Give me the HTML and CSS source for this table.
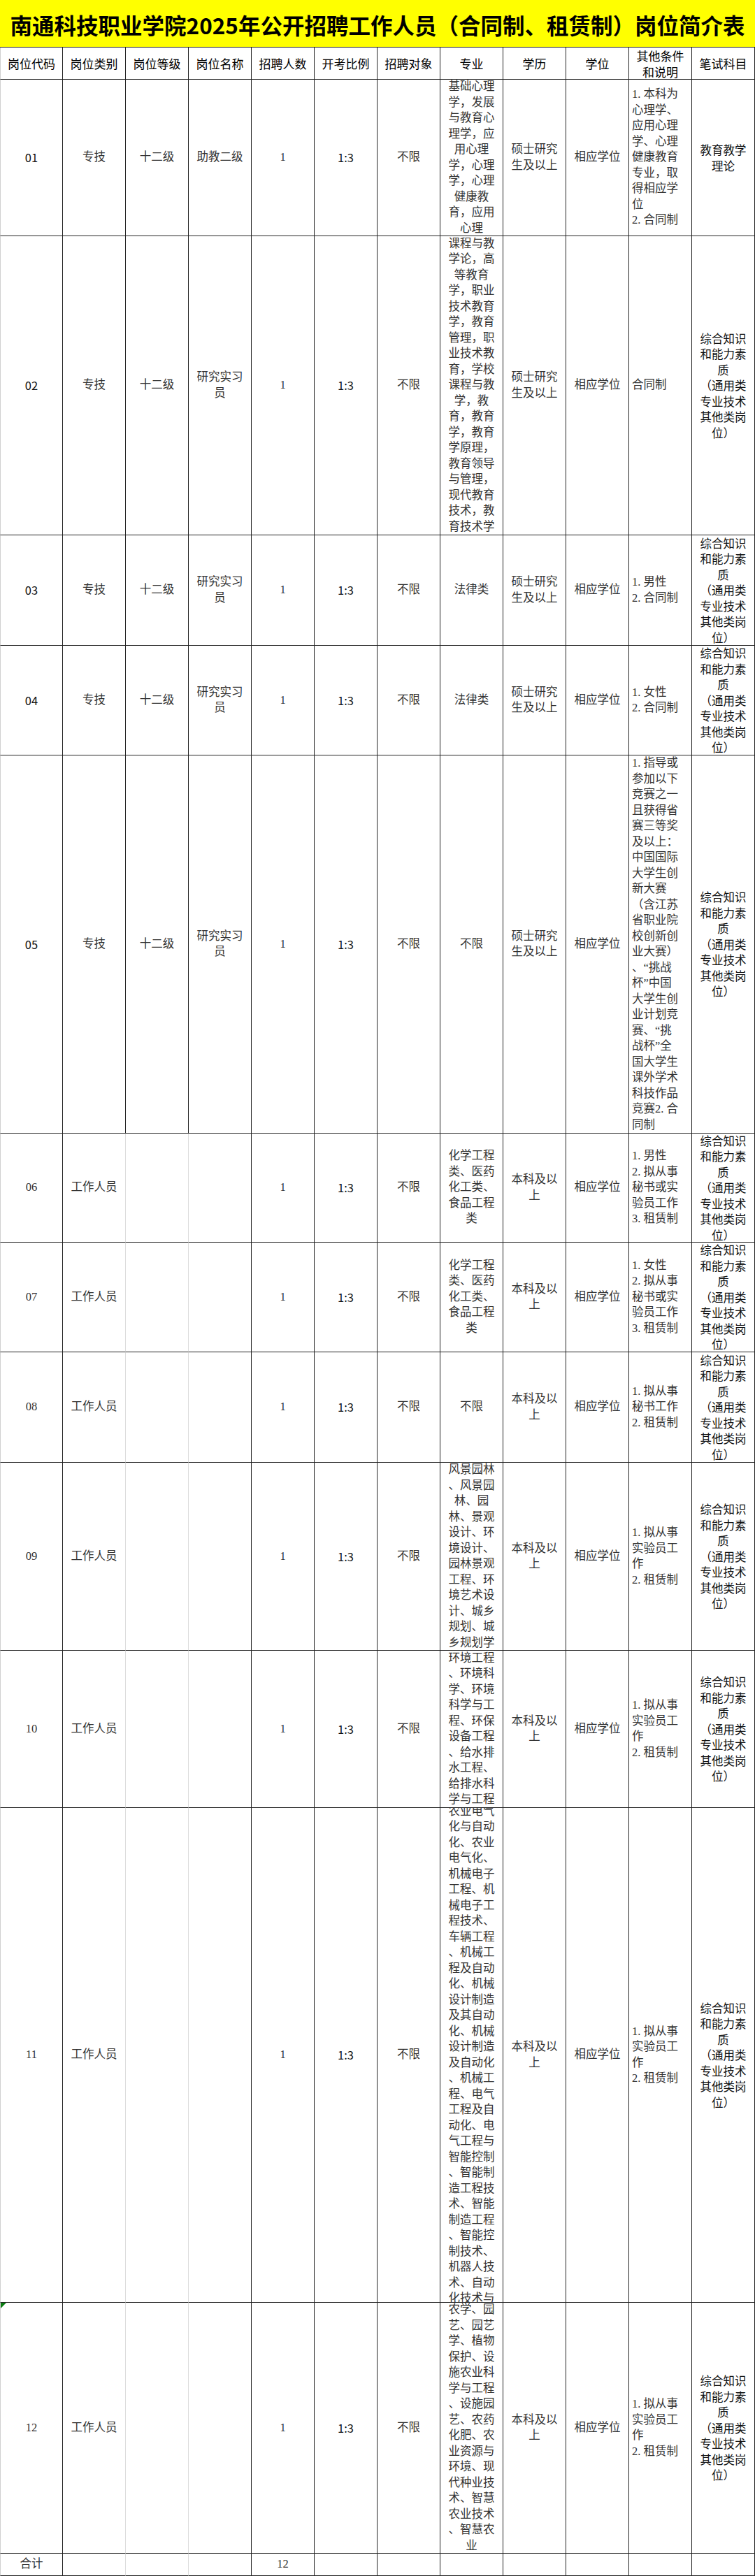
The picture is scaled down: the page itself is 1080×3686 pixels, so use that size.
FILE: index.html
```html
<!DOCTYPE html>
<html lang="zh-CN">
<head>
<meta charset="utf-8">
<title>岗位简介表</title>
<link rel="stylesheet" href="styles.css">
</head>
<body>
<div class="sheet">
  <div class="title">南通科技职业学院2025年公开招聘工作人员（合同制、租赁制）岗位简介表</div>
  <div class="grid">
    <div class="c h">岗位代码</div><div class="c h">岗位类别</div><div class="c h">岗位等级</div><div class="c h">岗位名称</div><div class="c h">招聘人数</div><div class="c h">开考比例</div><div class="c h">招聘对象</div><div class="c h">专业</div><div class="c h">学历</div><div class="c h">学位</div><div class="c h">其他条件<br>和说明</div><div class="c h">笔试科目</div>

    <div class="c s">01</div><div class="c">专技</div><div class="c">十二级</div><div class="c">助教二级</div><div class="c">1</div><div class="c s">1:3</div><div class="c">不限</div>
    <div class="c"><div>基础心理<br>学，发展<br>与教育心<br>理学，应<br>用心理<br>学，心理<br>学，心理<br>健康教<br>育，应用<br>心理</div></div>
    <div class="c">硕士研究<br>生及以上</div><div class="c">相应学位</div>
    <div class="c l"><div>1. 本科为<br>心理学、<br>应用心理<br>学、心理<br>健康教育<br>专业，取<br>得相应学<br>位<br>2. 合同制</div></div>
    <div class="c s">教育教学<br>理论</div>

    <div class="c s">02</div><div class="c">专技</div><div class="c">十二级</div><div class="c">研究实习<br>员</div><div class="c">1</div><div class="c s">1:3</div><div class="c">不限</div>
    <div class="c"><div>课程与教<br>学论，高<br>等教育<br>学，职业<br>技术教育<br>学，教育<br>管理，职<br>业技术教<br>育，学校<br>课程与教<br>学，教<br>育，教育<br>学，教育<br>学原理，<br>教育领导<br>与管理，<br>现代教育<br>技术，教<br>育技术学</div></div>
    <div class="c">硕士研究<br>生及以上</div><div class="c">相应学位</div>
    <div class="c l">合同制</div>
    <div class="c s">综合知识<br>和能力素<br>质<br>（通用类<br>专业技术<br>其他类岗<br>位）</div>

    <div class="c s">03</div><div class="c">专技</div><div class="c">十二级</div><div class="c">研究实习<br>员</div><div class="c">1</div><div class="c s">1:3</div><div class="c">不限</div>
    <div class="c">法律类</div>
    <div class="c">硕士研究<br>生及以上</div><div class="c">相应学位</div>
    <div class="c l">1. 男性<br>2. 合同制</div>
    <div class="c s">综合知识<br>和能力素<br>质<br>（通用类<br>专业技术<br>其他类岗<br>位）</div>

    <div class="c s">04</div><div class="c">专技</div><div class="c">十二级</div><div class="c">研究实习<br>员</div><div class="c">1</div><div class="c s">1:3</div><div class="c">不限</div>
    <div class="c">法律类</div>
    <div class="c">硕士研究<br>生及以上</div><div class="c">相应学位</div>
    <div class="c l">1. 女性<br>2. 合同制</div>
    <div class="c s">综合知识<br>和能力素<br>质<br>（通用类<br>专业技术<br>其他类岗<br>位）</div>

    <div class="c s">05</div><div class="c">专技</div><div class="c">十二级</div><div class="c">研究实习<br>员</div><div class="c">1</div><div class="c s">1:3</div><div class="c">不限</div>
    <div class="c">不限</div>
    <div class="c">硕士研究<br>生及以上</div><div class="c">相应学位</div>
    <div class="c l"><div>1. 指导或<br>参加以下<br>竞赛之一<br>且获得省<br>赛三等奖<br>及以上：<br>中国国际<br>大学生创<br>新大赛<br>（含江苏<br>省职业院<br>校创新创<br>业大赛）<br>、“挑战<br>杯”中国<br>大学生创<br>业计划竞<br>赛、“挑<br>战杯”全<br>国大学生<br>课外学术<br>科技作品<br>竞赛2. 合<br>同制</div></div>
    <div class="c s">综合知识<br>和能力素<br>质<br>（通用类<br>专业技术<br>其他类岗<br>位）</div>

    <div class="c">06</div><div class="c g">工作人员</div><div class="c g"></div><div class="c"></div><div class="c">1</div><div class="c s">1:3</div><div class="c">不限</div>
    <div class="c">化学工程<br>类、医药<br>化工类、<br>食品工程<br>类</div>
    <div class="c">本科及以<br>上</div><div class="c">相应学位</div>
    <div class="c l">1. 男性<br>2. 拟从事<br>秘书或实<br>验员工作<br>3. 租赁制</div>
    <div class="c s">综合知识<br>和能力素<br>质<br>（通用类<br>专业技术<br>其他类岗<br>位）</div>

    <div class="c">07</div><div class="c g">工作人员</div><div class="c g"></div><div class="c"></div><div class="c">1</div><div class="c s">1:3</div><div class="c">不限</div>
    <div class="c">化学工程<br>类、医药<br>化工类、<br>食品工程<br>类</div>
    <div class="c">本科及以<br>上</div><div class="c">相应学位</div>
    <div class="c l">1. 女性<br>2. 拟从事<br>秘书或实<br>验员工作<br>3. 租赁制</div>
    <div class="c s">综合知识<br>和能力素<br>质<br>（通用类<br>专业技术<br>其他类岗<br>位）</div>

    <div class="c">08</div><div class="c g">工作人员</div><div class="c g"></div><div class="c"></div><div class="c">1</div><div class="c s">1:3</div><div class="c">不限</div>
    <div class="c">不限</div>
    <div class="c">本科及以<br>上</div><div class="c">相应学位</div>
    <div class="c l">1. 拟从事<br>秘书工作<br>2. 租赁制</div>
    <div class="c s">综合知识<br>和能力素<br>质<br>（通用类<br>专业技术<br>其他类岗<br>位）</div>

    <div class="c">09</div><div class="c g">工作人员</div><div class="c g"></div><div class="c"></div><div class="c">1</div><div class="c s">1:3</div><div class="c">不限</div>
    <div class="c"><div>风景园林<br>、风景园<br>林、园<br>林、景观<br>设计、环<br>境设计、<br>园林景观<br>工程、环<br>境艺术设<br>计、城乡<br>规划、城<br>乡规划学</div></div>
    <div class="c">本科及以<br>上</div><div class="c">相应学位</div>
    <div class="c l">1. 拟从事<br>实验员工<br>作<br>2. 租赁制</div>
    <div class="c s">综合知识<br>和能力素<br>质<br>（通用类<br>专业技术<br>其他类岗<br>位）</div>

    <div class="c">10</div><div class="c g">工作人员</div><div class="c g"></div><div class="c"></div><div class="c">1</div><div class="c s">1:3</div><div class="c">不限</div>
    <div class="c"><div>环境工程<br>、环境科<br>学、环境<br>科学与工<br>程、环保<br>设备工程<br>、给水排<br>水工程、<br>给排水科<br>学与工程</div></div>
    <div class="c">本科及以<br>上</div><div class="c">相应学位</div>
    <div class="c l">1. 拟从事<br>实验员工<br>作<br>2. 租赁制</div>
    <div class="c s">综合知识<br>和能力素<br>质<br>（通用类<br>专业技术<br>其他类岗<br>位）</div>

    <div class="c">11</div><div class="c g">工作人员</div><div class="c g"></div><div class="c"></div><div class="c">1</div><div class="c s">1:3</div><div class="c">不限</div>
    <div class="c"><div>农业电气<br>化与自动<br>化、农业<br>电气化、<br>机械电子<br>工程、机<br>械电子工<br>程技术、<br>车辆工程<br>、机械工<br>程及自动<br>化、机械<br>设计制造<br>及其自动<br>化、机械<br>设计制造<br>及自动化<br>、机械工<br>程、电气<br>工程及自<br>动化、电<br>气工程与<br>智能控制<br>、智能制<br>造工程技<br>术、智能<br>制造工程<br>、智能控<br>制技术、<br>机器人技<br>术、自动<br>化技术与</div></div>
    <div class="c">本科及以<br>上</div><div class="c">相应学位</div>
    <div class="c l">1. 拟从事<br>实验员工<br>作<br>2. 租赁制</div>
    <div class="c s">综合知识<br>和能力素<br>质<br>（通用类<br>专业技术<br>其他类岗<br>位）</div>

    <div class="c flag">12</div><div class="c g">工作人员</div><div class="c g"></div><div class="c"></div><div class="c">1</div><div class="c s">1:3</div><div class="c">不限</div>
    <div class="c"><div>农学、园<br>艺、园艺<br>学、植物<br>保护、设<br>施农业科<br>学与工程<br>、设施园<br>艺、农药<br>化肥、农<br>业资源与<br>环境、现<br>代种业技<br>术、智慧<br>农业技术<br>、智慧农<br>业</div></div>
    <div class="c">本科及以<br>上</div><div class="c">相应学位</div>
    <div class="c l">1. 拟从事<br>实验员工<br>作<br>2. 租赁制</div>
    <div class="c s">综合知识<br>和能力素<br>质<br>（通用类<br>专业技术<br>其他类岗<br>位）</div>

    <div class="c">合计</div><div class="c g"></div><div class="c g"></div><div class="c"></div><div class="c">12</div><div class="c"></div><div class="c"></div><div class="c"></div><div class="c"></div><div class="c"></div><div class="c"></div><div class="c"></div>
  </div>
</div>
</body>
</html>
```

FILE: styles.css
```css
html, body {
  margin: 0;
  padding: 0;
  background: #ffffff;
}

.sheet {
  width: 1080px;
}

.title {
  box-sizing: border-box;
  height: 68px;
  padding-top: 4px;
  border-bottom: 1px solid #222;
  background: #ffff00;
  display: flex;
  align-items: center;
  justify-content: center;
  font: 700 31.5px/1 "Noto Sans CJK SC", sans-serif;
  color: #000;
  white-space: nowrap;
}

.grid {
  display: grid;
  grid-template-columns: repeat(12, 90px);
  grid-template-rows: 46px 224px 428px 158px 157px 541px 156px 157px 158px 269px 225px 708px 359px 32px;
}

.c {
  box-sizing: border-box;
  position: relative;
  border-right: 1px solid #222;
  border-bottom: 1px solid #222;
  display: flex;
  align-items: center;
  justify-content: center;
  text-align: center;
  overflow: hidden;
  white-space: nowrap;
  font: 400 16.5px/22.5px "Liberation Serif", "Noto Sans CJK SC", serif;
  color: #333;
}

.c:nth-child(12n+1) {
  border-left: 1px solid #d0d0d0;
}

.h {
  font: 400 17px/23px "Noto Sans CJK SC", sans-serif;
  color: #000;
}

.s {
  font-family: "Noto Sans CJK SC", sans-serif;
  color: #111;
}

.l {
  justify-content: flex-start;
  text-align: left;
  padding-left: 4px;
}

.g {
  border-right-color: #dcdcdc;
}

.flag::before {
  content: "";
  position: absolute;
  top: 0;
  left: 0;
  border-top: 8px solid #0b7d12;
  border-right: 8px solid transparent;
}
```
